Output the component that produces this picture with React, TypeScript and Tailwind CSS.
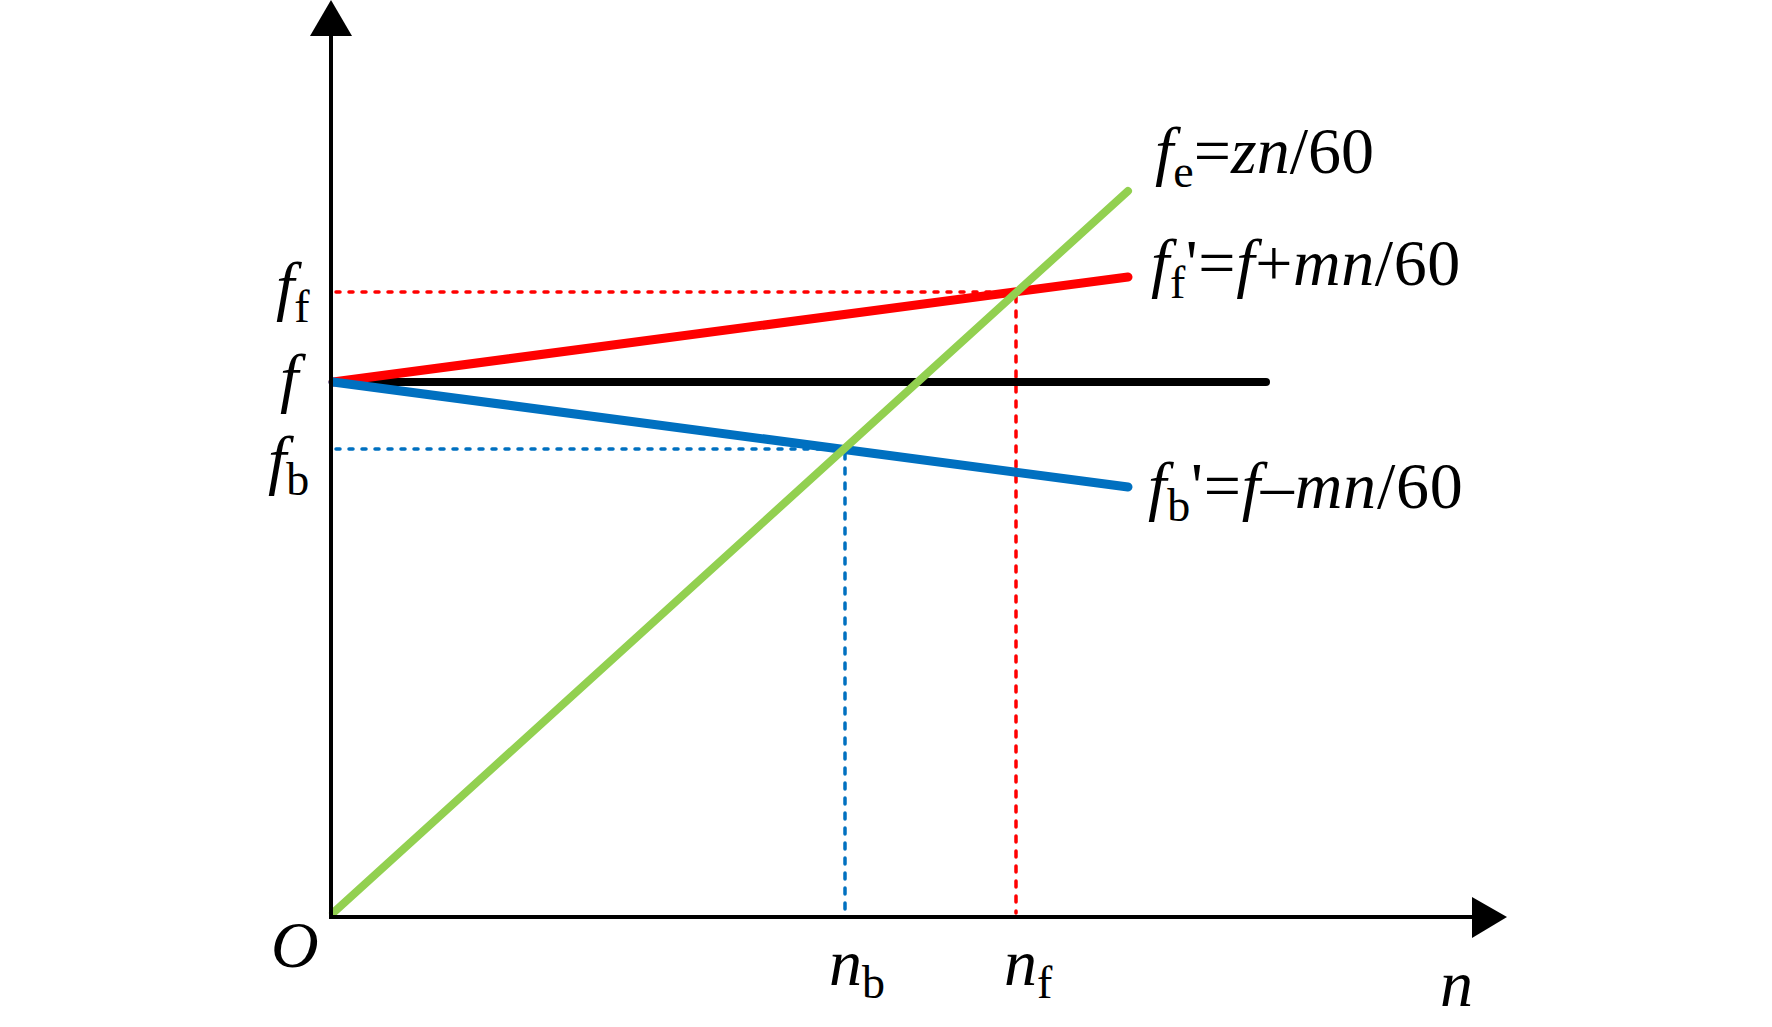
import React from 'react';

const RED = '#ff0000';
const GREEN = '#92d050';
const BLUE = '#0070c0';

const O = { x: 331, y: 917 };

// subscript: shifted down; the next run shifts back up (dy must sit on a run with glyphs)
const Sub = ({ children, dy = 13 }: { children: React.ReactNode; dy?: number }) => (
  <tspan fontSize={46} fontStyle="normal" dy={dy}>
    {children}
  </tspan>
);

const Chart = () => {
  return (
    <svg width={1772} height={1027} viewBox="0 0 1772 1027" className="block">
      {/* dashed guides */}
      <g strokeWidth={3.5} strokeLinecap="round" fill="none">
        <line x1={336} y1={292} x2={1014} y2={292} stroke={RED} strokeDasharray="4 9" />
        <line x1={336} y1={449} x2={840} y2={449} stroke={BLUE} strokeDasharray="4 9" />
        <line x1={1016} y1={296} x2={1016} y2={913} stroke={RED} strokeDasharray="6 9" />
        <line x1={845} y1={453} x2={845} y2={913} stroke={BLUE} strokeDasharray="6 9" />
      </g>

      {/* curves */}
      <g strokeLinecap="round" fill="none">
        <line x1={333} y1={382} x2={1266} y2={382} stroke="#000" strokeWidth={8} />
        <line x1={333} y1={382} x2={1128} y2={277} stroke={RED} strokeWidth={9} />
        <line x1={333} y1={382} x2={1128} y2={487} stroke={BLUE} strokeWidth={9} />
        <line x1={333} y1={913} x2={1128} y2={191} stroke={GREEN} strokeWidth={8} />
      </g>

      {/* axes */}
      <line x1={O.x} y1={34} x2={O.x} y2={919} stroke="#000" strokeWidth={4} />
      <line x1={O.x - 2} y1={O.y} x2={1474} y2={O.y} stroke="#000" strokeWidth={4} />
      <polygon points="331,0 310,36 352,36" fill="#000" />
      <polygon points="1472,897 1507,917 1472,938" fill="#000" />

      {/* labels */}
      <g className="font-['Liberation_Serif','Times_New_Roman',serif]" fontSize={66} fill="#000">
        <text x={1155} y={173} fontStyle="italic">
          f<Sub dy={14}>e</Sub>
          <tspan fontStyle="normal" dy={-14}>=</tspan>zn<tspan fontStyle="normal">/60</tspan>
        </text>
        <text x={1151} y={285} fontStyle="italic" letterSpacing={0.6}>
          f<Sub>f</Sub>
          <tspan fontStyle="normal" dy={-13}>'=</tspan>f<tspan fontStyle="normal">+</tspan>mn
          <tspan fontStyle="normal">/60</tspan>
        </text>
        <text x={1148} y={508} fontStyle="italic" letterSpacing={0.8}>
          f<Sub>b</Sub>
          <tspan fontStyle="normal" dy={-13}>'=</tspan>f<tspan fontStyle="normal">–</tspan>mn
          <tspan fontStyle="normal">/60</tspan>
        </text>

        <text x={276} y={308} fontStyle="italic">
          f<Sub dy={14}>f</Sub>
        </text>
        <text x={280} y={400} fontStyle="italic">
          f
        </text>
        <text x={268} y={482} fontStyle="italic">
          f<Sub>b</Sub>
        </text>

        <text x={271} y={967} fontStyle="italic">
          O
        </text>
        <text x={829} y={985} fontStyle="italic">
          n<Sub>b</Sub>
        </text>
        <text x={1004} y={985} fontStyle="italic">
          n<Sub>f</Sub>
        </text>
        <text x={1440} y={1006} fontStyle="italic">
          n
        </text>
      </g>
    </svg>
  );
};

export default function App() {
  return (
    <div className="w-[1772px] h-[1027px] bg-white overflow-hidden">
      <Chart />
    </div>
  );
}
